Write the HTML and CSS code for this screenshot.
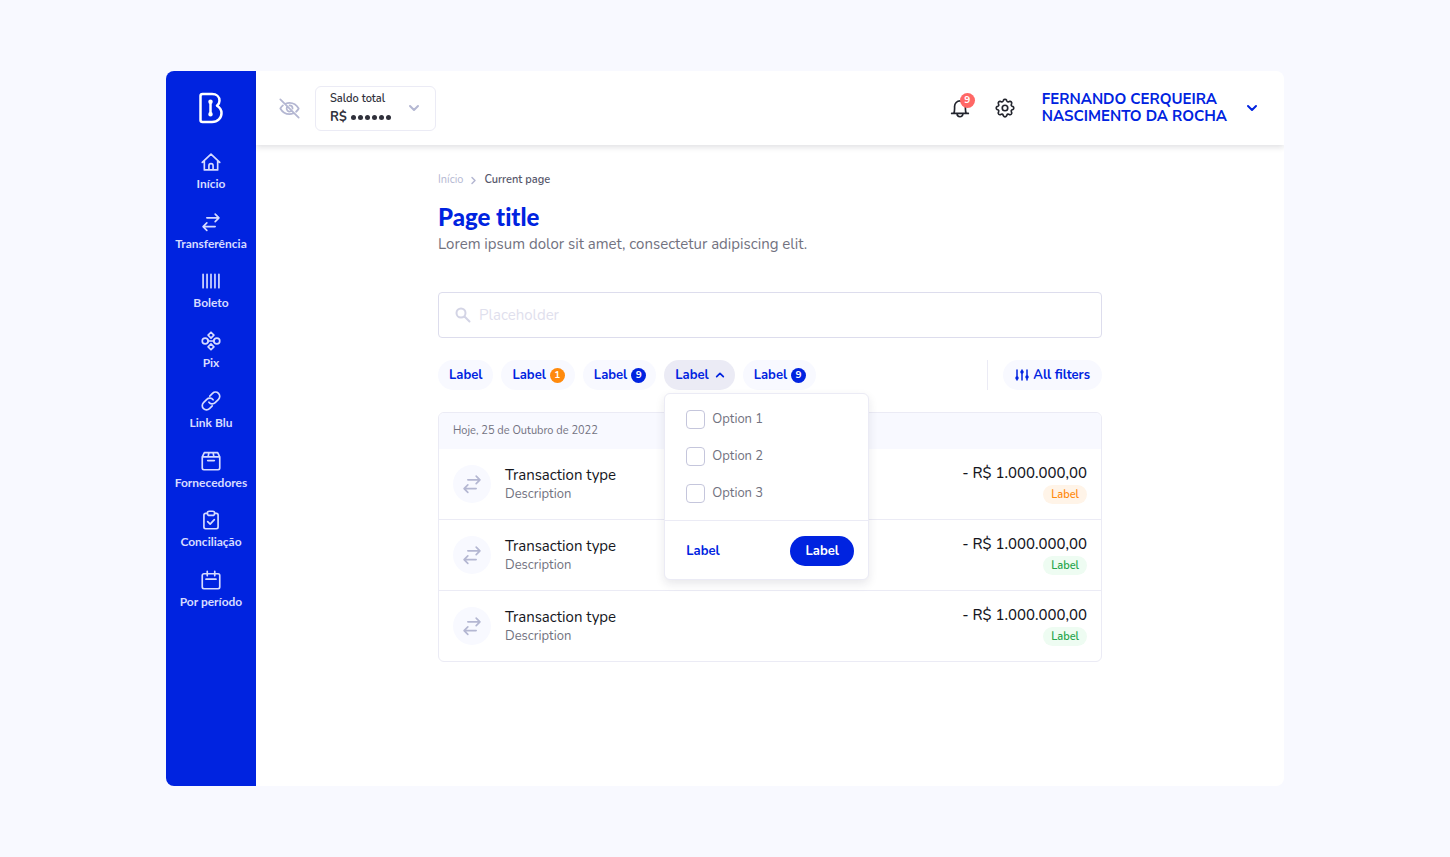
FILE: index.html
```html
<!DOCTYPE html>
<html lang="pt-BR">
<head>
<meta charset="utf-8">
<title>Page title</title>
<meta name="viewport" content="width=device-width, initial-scale=1">
<link rel="stylesheet" href="styles.css">
</head>
<body>
<svg class="sprite" aria-hidden="true">
  <symbol id="swap" viewBox="0 0 24 24"><path d="M7 7h14.500M17 2.500 21.500 7 17 11.500M17 17.500H2.500M7 13l-4.500 4.500L7 22"/></symbol>
  <symbol id="down" viewBox="0 0 12 12"><path d="m2 4 4 4 4-4"/></symbol>
  <symbol id="up" viewBox="0 0 12 12"><path d="m2 8 4-4 4 4"/></symbol>
</svg>
<div class="app">
  <aside class="sidebar">
    <a class="logo" href="#" aria-label="Blu">
      <svg width="24" height="32" viewBox="0 0 24 32"><path d="M3.500 2H13c4.500 0 7.500 2.800 7.500 6.700 0 2-1 3.800-2.500 5.100 2.700 1.700 4.500 4 4.500 7.200 0 5.200-3.800 9-9.500 9H3.500C2.200 30 1.500 29.500 1.500 28.300V3.700C1.500 2.500 2.200 2 3.500 2zM11.500 10v12"/><circle cx="11.500" cy="9.800" r="1"/><circle cx="11.500" cy="22.200" r="1"/></svg>
    </a>
    <nav class="menu">
      <a class="menu-item" href="#"><svg class="icon" viewBox="0 0 24 24"><path d="m1.500 12.500 10.500-10 10.500 10M4 10.500V21.500h16V10.500M9.500 21.500v-5a2.500 2.500 0 0 1 5 0v5"/></svg>Início</a>
      <a class="menu-item" href="#"><svg class="icon"><use href="#swap"/></svg>Transferência</a>
      <a class="menu-item" href="#"><svg class="icon" viewBox="0 0 24 24"><path d="M2.500 4v16M7.250 4v16M12 4v16M16.750 4v16M21.500 4v16"/></svg>Boleto</a>
      <a class="menu-item" href="#"><svg class="icon" viewBox="0 0 24 24"><path d="m12 1.500 3.500 3.500-3.500 3.500-3.500-3.500zM12 15.500l3.500 3.500-3.500 3.500-3.500-3.500zM8 10.500l1.500 1.500h5l1.500-1.500M8 13.500 9.500 12M16 13.500 14.500 12"/><circle cx="5" cy="12" r="3.500"/><circle cx="19" cy="12" r="3.500"/></svg>Pix</a>
      <a class="menu-item" href="#"><svg class="icon" viewBox="0 0 24 24"><path d="M9.500 13.500a5 5 0 0 0 7.500.500l4-4a5 5 0 0 0-7.200-7.200l-3.300 3.300M14.500 10.500a5 5 0 0 0-7.500-.500l-4 4a5 5 0 0 0 7.200 7.200l3.300-3.300"/></svg>Link Blu</a>
      <a class="menu-item" href="#"><svg class="icon" viewBox="0 0 24 24"><path d="M1.500 7 4 2h16L22.500 7v13.500a2 2 0 0 1-2 2h-17a2 2 0 0 1-2-2zM1.500 7h21M9.500 2 8.500 7M14.500 2l1 5M8 11.500h8"/></svg>Fornecedores</a>
      <a class="menu-item" href="#"><svg class="icon" viewBox="0 0 24 24"><path d="M8 4H5.500a2 2 0 0 0-2 2v14.500a2 2 0 0 0 2 2h13a2 2 0 0 0 2-2V6a2 2 0 0 0-2-2H16M10 1.500h4a2.200 2.200 0 0 1 0 5h-4a2.200 2.200 0 0 1 0-5zM8 14l3 3 5-5.500"/></svg>Conciliação</a>
      <a class="menu-item" href="#"><svg class="icon" viewBox="0 0 24 24"><path d="M3.500 4.500h17a2 2 0 0 1 2 2v14a2 2 0 0 1-2 2h-17a2 2 0 0 1-2-2v-14a2 2 0 0 1 2-2zM7.500 1.500V7M16.500 1.500V7M6 11h12"/></svg>Por período</a>
    </nav>
  </aside>
  <div class="main">
    <header class="topbar">
      <button class="ghost" aria-label="Mostrar saldo"><svg class="eye" viewBox="0 0 24 24"><path d="M7.500 6.500C9 5.800 10.400 5.500 12 5.500c5 0 8.500 3 10.500 6.500-.7 1.300-1.800 2.700-3 3.700M16.500 17.500c-1.500.7-3 1-4.500 1-5 0-8.500-3-10.500-6.500C2.300 10.600 3.300 9.400 4.500 8.400M9 10.500a3.500 3.500 0 0 0 4.500 4.700M12 8.500a3.500 3.500 0 0 1 3.500 3.500M1.500 1.500l21 21"/></svg></button>
      <button class="balance"><span class="balance-text"><span>Saldo total</span><span class="amount">R$ <span class="dots"><i></i><i></i><i></i><i></i><i></i><i></i></span></span></span><svg class="chevron pale"><use href="#down"/></svg></button>
      <button class="ghost bell" aria-label="Notificações"><svg class="icon dark" viewBox="0 0 24 24"><path d="M2 18.500h20M4.500 18.500c1-1.500 1-3 1-5.500v-3a6.500 6.500 0 0 1 13 0v3c0 2.500 0 4 1 5.500M8.500 19a3.500 3.500 0 0 0 7 0"/></svg><span class="alert">9</span></button>
      <button class="ghost" aria-label="Configurações"><svg class="icon dark" viewBox="0 0 24 24"><circle cx="12" cy="12" r="3.300"/><path d="M10.200 2.600a2 2 0 0 1 3.600 0l.4 1a1.800 1.800 0 0 0 2.300.9l1-.4a2 2 0 0 1 2.500 2.500l-.4 1a1.800 1.800 0 0 0 .9 2.300l1 .4a2 2 0 0 1 0 3.500l-1 .4a1.800 1.800 0 0 0-.9 2.300l.4 1a2 2 0 0 1-2.500 2.500l-1-.4a1.800 1.800 0 0 0-2.300.9l-.4 1a2 2 0 0 1-3.600 0l-.4-1a1.800 1.800 0 0 0-2.300-.9l-1 .4a2 2 0 0 1-2.500-2.500l.4-1a1.800 1.800 0 0 0-.9-2.300l-1-.4a2 2 0 0 1 0-3.500l1-.4a1.800 1.800 0 0 0 .9-2.300l-.4-1a2 2 0 0 1 2.500-2.500l1 .4a1.800 1.800 0 0 0 2.300-.9z"/></svg></button>
      <button class="user"><span>FERNANDO CERQUEIRA<br>NASCIMENTO DA ROCHA</span><svg class="chevron"><use href="#down"/></svg></button>
    </header>
    <main class="content">
      <nav class="crumbs" aria-label="Breadcrumb"><a href="#">Início</a><svg viewBox="0 0 12 12"><path d="m4 2 4 4-4 4"/></svg><span>Current page</span></nav>
      <h1>Page title</h1>
      <p class="lead">Lorem ipsum dolor sit amet, consectetur adipiscing elit.</p>
      <label class="search"><svg viewBox="0 0 16 16"><circle cx="6" cy="6" r="4.500"/><path d="m9.500 9.500 5 5"/></svg><input type="text" placeholder="Placeholder" aria-label="Placeholder"></label>
      <div class="filters">
        <button class="chip">Label</button>
        <button class="chip">Label<span class="count orange">1</span></button>
        <button class="chip">Label<span class="count">9</span></button>
        <div class="dropdown">
          <button class="chip open" aria-expanded="true">Label<svg class="chevron"><use href="#up"/></svg></button>
          <div class="popover">
            <div class="options">
              <label><input type="checkbox">Option 1</label>
              <label><input type="checkbox">Option 2</label>
              <label><input type="checkbox">Option 3</label>
            </div>
            <div class="actions"><button class="text-button">Label</button><button class="primary">Label</button></div>
          </div>
        </div>
        <button class="chip">Label<span class="count">9</span></button>
        <div class="all"><button class="chip all-chip"><svg viewBox="0 0 14 14"><path d="M2 2v10M7 2v10M12 2v10"/><circle cx="2" cy="10" r="1"/><circle cx="7" cy="4" r="1"/><circle cx="12" cy="9" r="1"/></svg>All filters</button></div>
      </div>
      <section class="list">
        <h2>Hoje, 25 de Outubro de 2022</h2>
        <article class="row"><span class="avatar"><svg><use href="#swap"/></svg></span><div class="what"><strong>Transaction type</strong><span>Description</span></div><div class="value"><strong>- R$ 1.000.000,00</strong><span class="tag warn">Label</span></div></article>
        <article class="row"><span class="avatar"><svg><use href="#swap"/></svg></span><div class="what"><strong>Transaction type</strong><span>Description</span></div><div class="value"><strong>- R$ 1.000.000,00</strong><span class="tag">Label</span></div></article>
        <article class="row"><span class="avatar"><svg><use href="#swap"/></svg></span><div class="what"><strong>Transaction type</strong><span>Description</span></div><div class="value"><strong>- R$ 1.000.000,00</strong><span class="tag">Label</span></div></article>
      </section>
    </main>
  </div>
</div>
</body>
</html>
```
FILE: styles.css
```css
:root {
  --blue: #0023e0;
  --line: #ebebf5;
  --pale: #b4b7d2;
  --grey: #72727f;
  --body: Nunito, "Open Sans", "Noto Sans", sans-serif;
  --display: Avenir, Lato, sans-serif;
}
* { box-sizing: border-box; }
body {
  margin: 0;
  min-height: 100vh;
  padding: 71px 166px;
  display: flex;
  background: #f8f9ff;
  font: 14px/20px var(--body);
  color: #15161d;
}
button { border: 0; padding: 0; background: none; font: inherit; color: inherit; cursor: pointer; }
a { color: inherit; text-decoration: none; }
svg { flex: none; fill: none; stroke: currentColor; stroke-width: 2; stroke-linecap: round; stroke-linejoin: round; }
.sprite { position: absolute; width: 0; height: 0; }
.app { flex: 1; display: flex; border-radius: 8px; overflow: hidden; background: #fff; }

.sidebar {
  flex: none;
  width: 90px;
  padding-top: 21px;
  display: flex;
  flex-direction: column;
  align-items: center;
  gap: 28px;
  background: var(--blue);
  color: #fff;
}
.logo { display: flex; }
.logo svg { stroke-width: 2.5; }
.menu { display: flex; flex-direction: column; justify-content: space-between; height: 458px; }
.menu-item {
  display: flex;
  flex-direction: column;
  align-items: center;
  gap: 4px;
  font: 700 12px/16px var(--display);
  color: #d6dbff;
}
.icon { width: 20px; height: 20px; }

.main { flex: 1; min-width: 0; }
.topbar {
  height: 74px;
  padding: 0 26px 0 23px;
  display: flex;
  align-items: center;
  box-shadow: 0 2px 6px rgba(20, 20, 40, .14);
}
.ghost { display: flex; position: relative; color: var(--pale); }
.eye { width: 21px; height: 21px; }
.dark { color: #22242d; }
.chevron { width: 12px; height: 12px; }
.pale { color: var(--pale); }
.balance {
  width: 121px;
  height: 45px;
  margin: 0 auto 0 15px;
  padding: 0 15px 0 14px;
  display: flex;
  align-items: center;
  justify-content: space-between;
  border: 1px solid var(--line);
  border-radius: 6px;
  text-align: left;
  font: 600 11px/18px var(--body);
  color: #30313b;
}
.balance-text { display: flex; flex-direction: column; }
.amount { display: flex; align-items: center; gap: 4px; font-size: 13px; font-weight: 700; }
.dots { display: flex; gap: 2px; }
.dots i { width: 5px; height: 5px; border-radius: 50%; background: currentColor; }
.bell { margin-right: 25px; }
.alert {
  position: absolute;
  left: 10px;
  top: -5px;
  width: 15px;
  height: 15px;
  border-radius: 50%;
  background: #ff6765;
  color: #fff;
  font: 700 10px/15px var(--body);
  text-align: center;
}
.user {
  margin-left: 27px;
  display: flex;
  align-items: center;
  gap: 19px;
  text-align: left;
  font: 700 15px/17px "Nunito Sans", var(--body);
  color: var(--blue);
}

.content { width: 100%; max-width: 664px; margin: 0 auto; padding: 26px 0; }
.crumbs { display: flex; align-items: center; gap: 6px; font-size: 11px; line-height: 18px; color: var(--pale); }
.crumbs svg { width: 9px; height: 9px; }
.crumbs span { font-weight: 600; color: #55566a; }
h1 { margin: 13px 0 0; font: 900 24px/30px var(--display); font-variant-ligatures: none; color: var(--blue); }
.lead { margin: 1px 0 0; font-size: 15px; line-height: 22px; color: var(--grey); }
.search {
  height: 46px;
  margin-top: 37px;
  padding: 0 16px;
  display: flex;
  align-items: center;
  gap: 8px;
  border: 1px solid #dddded;
  border-radius: 4px;
  color: #d3d4e5;
}
.search svg { width: 16px; height: 16px; }
.search input { flex: 1; min-width: 0; border: 0; outline: 0; padding: 0; background: none; font: 15px/20px var(--body); color: var(--grey); }
.search input::placeholder { color: #dfe0ed; opacity: 1; }
.filters { margin-top: 22px; display: flex; gap: 8px; }
.chip {
  height: 30px;
  padding: 0 11px;
  display: flex;
  align-items: center;
  gap: 4px;
  border-radius: 15px;
  background: #f8f9ff;
  font: 700 13px/20px var(--body);
  color: var(--blue);
}
.chip:has(.count) { padding-right: 10px; }
.chip .chevron { width: 10px; height: 10px; margin-left: 2px; }
.chip.open { padding-right: 10px; background: #ebebf5; }
.count {
  width: 15px;
  height: 15px;
  border-radius: 50%;
  background: var(--blue);
  color: #fff;
  font-size: 10px;
  line-height: 15px;
  text-align: center;
}
.orange { background: #ff8a0d; }
.all { margin-left: auto; padding-left: 15px; border-left: 1px solid var(--line); }
.all-chip { padding: 0 12px; }
.all-chip svg { width: 14px; height: 14px; stroke-width: 1.5; }
.dropdown { position: relative; }
.popover {
  position: absolute;
  z-index: 1;
  left: 0;
  top: 33px;
  width: 205px;
  border: 1px solid var(--line);
  border-radius: 6px;
  background: #fff;
  box-shadow: 0 4px 10px rgba(30, 30, 60, .1);
}
.options { padding: 15px 21px 17px; display: flex; flex-direction: column; gap: 17px; }
.options label { display: flex; align-items: center; gap: 7px; font-size: 13px; color: var(--grey); }
.options input { appearance: none; width: 19px; height: 19px; margin: 0; border: 1px solid #c5c6dc; border-radius: 4px; }
.actions {
  padding: 15px 14px 13px 21px;
  display: flex;
  justify-content: space-between;
  border-top: 1px solid var(--line);
  font-size: 13px;
  font-weight: 700;
}
.text-button { color: var(--blue); }
.primary { width: 64px; height: 30px; border-radius: 15px; background: var(--blue); color: #fff; }

.list { margin-top: 22px; border: 1px solid var(--line); border-radius: 6px; overflow: hidden; }
h2 { margin: 0; padding: 9px 14px; background: #f8f9ff; font: 11px/18px var(--body); color: var(--grey); }
.row { height: 71px; padding: 0 14px; display: flex; align-items: center; gap: 14px; border-bottom: 1px solid var(--line); }
.row:last-child { height: 70px; border-bottom: 0; }
.avatar { width: 38px; height: 38px; display: grid; place-items: center; border-radius: 50%; background: #f8f9ff; color: var(--pale); }
.avatar svg { width: 20px; height: 20px; }
.what, .value { display: flex; flex-direction: column; }
.what strong, .value strong { font-size: 15px; line-height: 20px; font-weight: 400; }
.what span { font-size: 13px; line-height: 18px; color: var(--grey); }
.value { margin-left: auto; align-items: flex-end; gap: 2px; padding-bottom: 2px; }
.value strong { font-weight: 500; }
.tag { padding: 0 8px; border-radius: 10px; background: #eefcf2; font-size: 11px; line-height: 19px; font-weight: 600; color: #25a54a; }
.warn { background: #fff4e8; color: #ff8a0d; }
```
